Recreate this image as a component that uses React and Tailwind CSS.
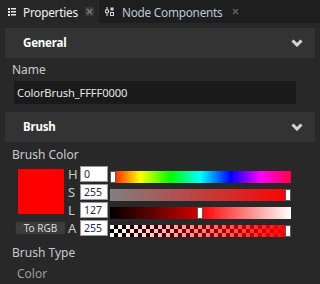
import React from "react";

const rows = [
  { l: "H", v: 0, track: "hue" },
  { l: "S", v: 255, track: "sat" },
  { l: "L", v: 127, track: "lum" },
  { l: "A", v: 255, track: "alpha" },
];

function Track({ kind, v }) {
  const pct = (v / 255) * 175;
  let inner;
  if (kind === "hue")
    inner = (
      <div className="h-full w-full bg-[image:linear-gradient(to_right,#ff0000,#ffff00,#00ff00,#00ffff,#0000ff,#ff00ff,#ff0044)]" />
    );
  else if (kind === "sat")
    inner = <div className="h-full w-full bg-[image:linear-gradient(to_right,#808080,#ff0000)]" />;
  else if (kind === "lum")
    inner = (
      <div className="h-full w-full bg-[image:linear-gradient(to_right,#000000,#d00000_49%,#ff0000_50%,#ffffff)]" />
    );
  else
    inner = (
      <div className="h-full w-full bg-[image:repeating-conic-gradient(#000_0_25%,#fff_0_50%)] bg-[length:8px_8px]">
        <div className="h-full w-full bg-[image:linear-gradient(to_right,rgba(255,0,0,0),#ff0000)]" />
      </div>
    );
  return (
    <div className="relative ml-[2px] mt-[5px] h-[12px] w-[181px]">
      {inner}
      <div
        className="absolute top-0 h-[12px] w-[6px] border border-[#5a5a5a] bg-white"
        style={{ left: pct }}
      />
    </div>
  );
}

function Chevron() {
  return (
    <svg width="12" height="8" viewBox="0 0 12 8">
      <polyline points="1.5,1.5 6,6 10.5,1.5" fill="none" stroke="#d4d4d4" strokeWidth="3" />
    </svg>
  );
}

function Header({ title }) {
  return (
    <div className="flex h-[30px] items-center justify-between bg-[#333333] pl-[18px] pr-[12px]">
      <span className="text-[11.5px] font-bold tracking-[-0.2px] text-white">{title}</span>
      <Chevron />
    </div>
  );
}

export default function App() {
  return (
    <div className="h-[284px] w-[320px] overflow-hidden bg-[#282828] font-['Segoe_UI','Noto_Sans',sans-serif] text-[11.5px] leading-[16px]">
      {/* tab strip */}
      <div className="flex h-[23px] bg-[#1e1e1e]">
        <div className="flex w-[99px] items-center bg-[#262626] pl-[8px]">
          <svg width="8" height="8" viewBox="0 0 8 8" className="mr-[7px]">
            <rect x="0" y="0" width="2" height="2" fill="#e8e8e8" />
            <rect x="3" y="0" width="5" height="1.5" fill="#e8e8e8" />
            <rect x="0" y="3" width="2" height="2" fill="#e8e8e8" />
            <rect x="3" y="3" width="5" height="1.5" fill="#e8e8e8" />
            <rect x="0" y="6" width="2" height="2" fill="#e8e8e8" />
            <rect x="3" y="6" width="5" height="1.5" fill="#e8e8e8" />
          </svg>
          <span className="text-[11.8px] tracking-[-0.25px] text-[#f2f2f2]">Properties</span>
          <div className="ml-[7px] flex h-[9px] w-[9px] items-center justify-center bg-[#363636]">
            <svg width="7" height="7" viewBox="0 0 7 7">
              <path d="M1 1L6 6M6 1L1 6" stroke="#7a7a7a" strokeWidth="1.6" />
            </svg>
          </div>
        </div>
        <div className="flex items-center pl-[6px]">
          <svg width="9" height="9" viewBox="0 0 9 9" className="mr-[8px]">
            <line x1="2" y1="0" x2="2" y2="2" stroke="#cfd6de" strokeWidth="1.2" />
            <circle cx="2" cy="4.3" r="1.7" fill="none" stroke="#cfd6de" strokeWidth="1.2" />
            <line x1="2" y1="6.5" x2="2" y2="9" stroke="#cfd6de" strokeWidth="1.2" />
            <rect x="5.5" y="0.5" width="3" height="3" fill="#cfd6de" />
            <rect x="5.5" y="5.5" width="3" height="3" fill="none" stroke="#cfd6de" strokeWidth="1" />
          </svg>
          <span className="text-[11.8px] tracking-[-0.25px] text-[#b9c9da]">Node Components</span>
          <svg width="7" height="7" viewBox="0 0 7 7" className="ml-[9px]">
            <path d="M1 1L6 6M6 1L1 6" stroke="#5e5e5e" strokeWidth="1.6" />
          </svg>
        </div>
      </div>

      <div className="px-[5px] pt-[5px]">
        <Header title="General" />
        <div className="mt-[4px] pl-[7px] text-[12px] text-[#c5ccd4]">Name</div>
        <div className="ml-[9px] mt-[3px] flex h-[23px] w-[282px] items-center bg-[#1a1a1a] pl-[3px] text-[11.2px] tracking-[-0.15px] text-[#e6e6e6]">
          ColorBrush_FFFF0000
        </div>
        <div className="mt-[8px]">
          <Header title="Brush" />
        </div>
        <div className="mt-[5px] pl-[7px] text-[12px] text-[#c5ccd4]">Brush Color</div>
        <div className="ml-[10px] mt-[3px] flex">
          <div className="flex w-[51px] flex-col">
            <div className="ml-[3px] mt-[3px] h-[45px] w-[46px] bg-[#ff0000]" />
            <div className="mt-[7px] flex h-[14px] w-[51px] items-center justify-center rounded-[2px] border border-[#2a2a2a] bg-[#3c3c3c] text-[10px] text-[#d8d8d8]">
              To RGB
            </div>
          </div>
          <div className="ml-[2px] flex flex-col gap-[2px]">
            {rows.map((r) => (
              <div key={r.l} className="flex h-[16px] items-start">
                <span className="w-[12px] text-[13px] leading-[16px] text-[#c8c8c8]">{r.l}</span>
                <div className="flex h-[16px] w-[28px] items-center border border-[#9a9a9a] bg-white pl-[3px] text-[10.5px] text-[#1a2a4a]">
                  {r.v}
                </div>
                <Track kind={r.track} v={r.v} />
              </div>
            ))}
          </div>
        </div>
        <div className="mt-[9px] pl-[7px] text-[12px] text-[#c5ccd4]">Brush Type</div>
        <div className="mt-[5px] pl-[12px] text-[12px] text-[#9c9c9c]">Color</div>
      </div>
    </div>
  );
}
